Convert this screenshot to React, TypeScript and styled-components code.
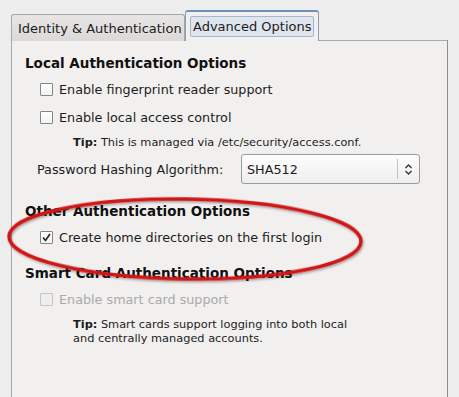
import React from 'react';
import styled, { createGlobalStyle } from 'styled-components';

const GlobalStyle = createGlobalStyle`
  html, body {
    margin: 0;
    padding: 0;
    background: #ededed;
    font-family: 'DejaVu Sans', 'Liberation Sans', sans-serif;
    color: #1c1c1c;
  }
`;

const Page = styled.div`
  position: relative;
  width: 459px;
  height: 397px;
  overflow: hidden;
  padding: 10px 0 0 11px;
  box-sizing: border-box;
`;

const TabBar = styled.div`
  display: flex;
  align-items: flex-end;
  height: 31px;
  position: relative;
  z-index: 1;
`;

const Tab = styled.div<{ $active?: boolean }>`
  box-sizing: border-box;
  display: flex;
  align-items: center;
  font-size: 13px;
  border: 1px solid #a6a6a6;
  border-bottom: none;
  border-radius: 3px 3px 0 0;
  ${(p) =>
    p.$active
      ? `
    width: 134px;
    height: 31px;
    padding: 5px 4px 5px 4px;
    background: #f1f0ef;
    border-color: #8f9db0;
    border-top: 2px solid #6f8fbd;
  `
      : `
    width: 174px;
    height: 27px;
    padding: 0 0 0 6px;
    background: linear-gradient(#e7e6e5, #dad9d8);
  `}
`;

const TabFocus = styled.div`
  box-sizing: border-box;
  flex: 1;
  height: 21px;
  display: flex;
  align-items: center;
  padding-left: 2px;
  border: 1px solid #a9b6c8;
  border-radius: 2px;
  background: #dfe5ed;
`;

const Panel = styled.div`
  box-sizing: border-box;
  width: 437px;
  height: 360px;
  margin-top: -1px;
  border: 1px solid #a9a9a9;
  border-right-color: #8e8e8e;
  background: #f1f0ef;
  padding: 10px 0 0 0;
  display: flex;
  flex-direction: column;
`;

const Heading = styled.div<{ $gap?: number }>`
  height: 24px;
  display: flex;
  align-items: center;
  padding-left: 13px;
  margin-top: ${(p) => p.$gap ?? 0}px;
  font-size: 13.5px;
  font-weight: bold;
  color: #111;
`;

const CheckRow = styled.label<{ $disabled?: boolean }>`
  height: 28px;
  display: flex;
  align-items: center;
  gap: 6px;
  padding-left: 28px;
  font-size: 12.75px;
  color: ${(p) => (p.$disabled ? '#a9a9a9' : '#1c1c1c')};
`;

const Box = styled.span<{ $disabled?: boolean }>`
  box-sizing: border-box;
  width: 13px;
  height: 13px;
  border: 1px solid ${(p) => (p.$disabled ? '#c4c4c4' : '#868686')};
  border-radius: 1px;
  background: ${(p) => (p.$disabled ? '#eeeeee' : 'linear-gradient(#ffffff, #f2f2f2)')};
  display: flex;
  align-items: center;
  justify-content: center;
`;

const Tip = styled.div<{ $gap?: number }>`
  padding-left: 61px;
  margin-top: ${(p) => p.$gap ?? 0}px;
  font-size: 11.35px;
  line-height: 14px;
  min-height: 21px;
  display: flex;
  flex-direction: column;
  justify-content: center;
  color: #1c1c1c;
  b {
    font-weight: bold;
  }
`;

const FieldRow = styled.div`
  height: 34px;
  display: flex;
  align-items: center;
  padding-left: 25px;
  font-size: 12.75px;
`;

const FieldLabel = styled.span`
  width: 204px;
`;

const Combo = styled.div`
  box-sizing: border-box;
  width: 179px;
  height: 30px;
  border: 1px solid #9b9b9b;
  border-radius: 3px;
  background: linear-gradient(#fdfdfd, #eeeeee);
  display: flex;
  align-items: center;
  font-size: 12.75px;
`;

const ComboText = styled.span`
  flex: 1;
  padding-left: 5px;
`;

const ComboArrow = styled.span`
  width: 21px;
  height: 20px;
  border-left: 1px solid #c3c3c3;
  display: flex;
  align-items: center;
  justify-content: center;
`;

const Overlay = styled.svg`
  position: absolute;
  left: 0;
  top: 0;
  pointer-events: none;
`;

function Check({ checked, disabled }: { checked?: boolean; disabled?: boolean }) {
  return (
    <Box $disabled={disabled}>
      {checked && (
        <svg width="9" height="9" viewBox="0 0 9 9">
          <path d="M1 4.5 L3.5 7.5 L8 1" fill="none" stroke="#222" strokeWidth="1.6" />
        </svg>
      )}
    </Box>
  );
}

export default function App() {
  return (
    <Page>
      <GlobalStyle />
      <TabBar>
        <Tab>Identity &amp; Authentication</Tab>
        <Tab $active>
          <TabFocus>Advanced Options</TabFocus>
        </Tab>
      </TabBar>
      <Panel>
        <Heading>Local Authentication Options</Heading>
        <CheckRow>
          <Check />
          Enable fingerprint reader support
        </CheckRow>
        <CheckRow>
          <Check />
          Enable local access control
        </CheckRow>
        <Tip>
          <span>
            <b>Tip:</b> This is managed via /etc/security/access.conf.
          </span>
        </Tip>
        <FieldRow>
          <FieldLabel>Password Hashing Algorithm:</FieldLabel>
          <Combo>
            <ComboText>SHA512</ComboText>
            <ComboArrow>
              <svg width="9" height="13" viewBox="0 0 9 13">
                <path d="M1.5 5 L4.5 2 L7.5 5 M1.5 8 L4.5 11 L7.5 8" fill="none" stroke="#333" strokeWidth="1.3" />
              </svg>
            </ComboArrow>
          </Combo>
        </FieldRow>
        <Heading $gap={13}>Other Authentication Options</Heading>
        <CheckRow>
          <Check checked />
          Create home directories on the first login
        </CheckRow>
        <Heading $gap={10}>Smart Card Authentication Options</Heading>
        <CheckRow $disabled>
          <Check disabled />
          Enable smart card support
        </CheckRow>
        <Tip $gap={4}>
          <span>
            <b>Tip:</b> Smart cards support logging into both local
          </span>
          <span>and centrally managed accounts.</span>
        </Tip>
      </Panel>
      <Overlay width="459" height="397" viewBox="0 0 459 397">
        <defs>
          <filter id="sh" x="-10%" y="-30%" width="120%" height="160%">
            <feDropShadow dx="1" dy="1.5" stdDeviation="1.2" floodColor="#000" floodOpacity="0.35" />
          </filter>
        </defs>
        <ellipse
          cx="185"
          cy="239"
          rx="176"
          ry="40"
          transform="rotate(0.8 185 239)"
          fill="none"
          stroke="#d01818"
          strokeWidth="3.5"
          filter="url(#sh)"
        />
      </Overlay>
    </Page>
  );
}
